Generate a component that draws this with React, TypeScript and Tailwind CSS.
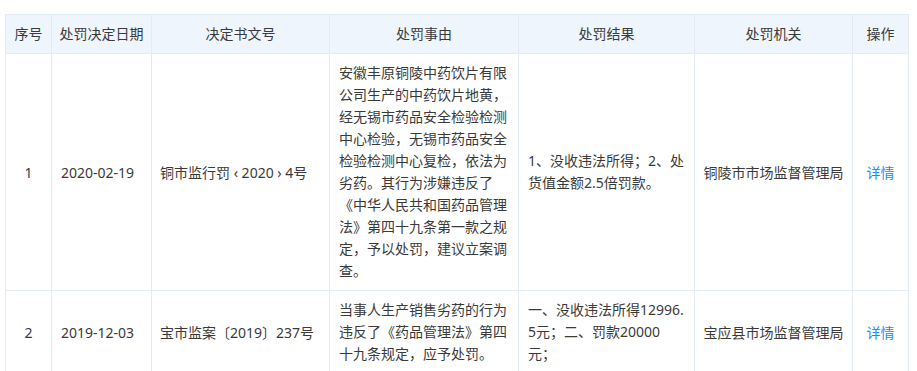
const rows = [
  {
    no: "1",
    date: "2020-02-19",
    doc: "铜市监行罚 ‹ 2020 › 4号",
    reason:
      "安徽丰原铜陵中药饮片有限公司生产的中药饮片地黄，经无锡市药品安全检验检测中心检验，无锡市药品安全检验检测中心复检，依法为劣药。其行为涉嫌违反了《中华人民共和国药品管理法》第四十九条第一款之规定，予以处罚，建议立案调查。",
    result: "1、没收违法所得；2、处货值金额2.5倍罚款。",
    org: "铜陵市市场监督管理局",
  },
  {
    no: "2",
    date: "2019-12-03",
    doc: "宝市监案〔2019〕237号",
    reason: "当事人生产销售劣药的行为违反了《药品管理法》第四十九条规定，应予处罚。",
    result: "一、没收违法所得12996.5元；二、罚款20000元；",
    org: "宝应县市场监督管理局",
  },
];

const widths = ["w-[46px]", "w-[100px]", "w-[178px]", "w-[189px]", "w-[176px]", "w-[158px]", "w-[56px]"];
const headers = ["序号", "处罚决定日期", "决定书文号", "处罚事由", "处罚结果", "处罚机关", "操作"];

export default function App() {
  return (
    <div
      className="bg-white w-[917px] h-[371px] overflow-hidden pt-[14px] pl-[5px] text-[14px] text-[#3a3a3a]"
      style={{ fontFamily: '"Noto Sans", "Noto Sans CJK SC", sans-serif' }}
    >
      <table className="table-fixed border-collapse w-[904px]">
        <colgroup>
          {widths.map((w, i) => (
            <col key={i} className={w} />
          ))}
        </colgroup>
        <thead>
          <tr className="bg-[#eef5fc] h-[39px]">
            {headers.map((h) => (
              <th key={h} className="border border-[#e3ecf6] font-normal text-center px-0 leading-[22px] whitespace-nowrap">
                {h}
              </th>
            ))}
          </tr>
        </thead>
        <tbody>
          {rows.map((r) => (
            <tr key={r.no}>
              <td className="border border-[#e3ecf6] text-center align-middle">{r.no}</td>
              <td className="border border-[#e3ecf6] px-[9px] align-middle whitespace-nowrap">{r.date}</td>
              <td className="border border-[#e3ecf6] px-[8px] align-middle whitespace-nowrap">{r.doc}</td>
              <td className="border border-[#e3ecf6] px-[9px] py-[8px] align-middle leading-[22px] break-all">
                {r.reason}
              </td>
              <td className="border border-[#e3ecf6] px-[9px] py-[8px] align-middle leading-[22px] break-all">
                {r.result}
              </td>
              <td className="border border-[#e3ecf6] px-[8px] align-middle text-center whitespace-nowrap">{r.org}</td>
              <td className="border border-[#e3ecf6] text-center align-middle">
                <a className="text-[#1e8cf0] cursor-pointer">详情</a>
              </td>
            </tr>
          ))}
        </tbody>
      </table>
    </div>
  );
}
